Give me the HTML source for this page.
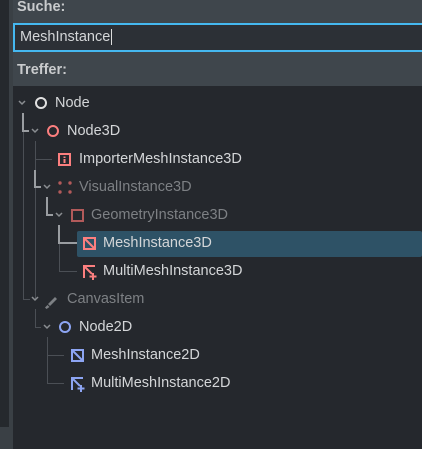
<!DOCTYPE html><html><head><style>
body{margin:0;width:422px;height:449px;overflow:hidden;background:#3f464c;font-family:"Liberation Sans","DejaVu Sans",sans-serif;position:relative}
.a{position:absolute}
.t{position:absolute;font-size:14.5px;color:#d4d6d8;line-height:16px;white-space:nowrap}
.g{color:#7d8084}
.b{font-weight:bold;color:#c9cbcd}
</style></head><body>
<div class="a" style="left:0;top:0;width:13px;height:449px;background:#3a4045"></div>
<div class="a" style="left:0;top:0;width:9px;height:427px;background:#25292d"></div>
<div class="t b" style="left:17px;top:-1px">Suche:</div>
<div class="a" style="left:13px;top:23px;height:25px;background:#2c3036;border-top:2px solid #45b8f0;border-bottom:2px solid #45b8f0;border-left:2px solid #45b8f0;width:407px"></div>
<div class="t" style="left:20px;top:29px">MeshInstance<span style="border-left:1px solid #ddd;margin-left:1px"></span></div>
<div class="t b" style="left:17px;top:62px">Treffer:</div>
<div class="a" style="left:13px;top:86px;width:409px;height:363px;background:#25282d"></div>
<div class="a" style="left:77px;top:231px;width:345px;height:26px;background:#2e5266;border-radius:2px"></div>
<svg class="a" style="left:0;top:0" width="422" height="449">
<g stroke="#4b4f55" stroke-width="1" fill="none">
<path d="M35.5 141V300M35.5 159.5H52M59.5 243V271.5H77M23.5 131V299.5H30M35.5 309V327.5H41M47.5 337V383.5H64M47.5 355.5H64"/>
</g>
<g stroke="#9a9da1" stroke-width="2" fill="none">
<path d="M23 113V131H29M35 170V187H41M47 197V215H53M59 225V243H77"/>
</g>
<g stroke="#8a8d91" stroke-width="1.5" fill="none">
<path d="M19 101l3 3 3-3M32 129l3 3 3-3M44 185l3 3 3-3M56 213l3 3 3-3M32 297l3 3 3-3M44 325l3 3 3-3"/>
</g>
<circle cx="41" cy="103" r="5" fill="none" stroke="#e0e0e0" stroke-width="2"/>
<circle cx="53" cy="131" r="5" fill="none" stroke="#fc7f7f" stroke-width="2"/>
<rect x="59" y="154" width="11" height="11" fill="none" stroke="#fc7f7f" stroke-width="2"/><path d="M64.5 156.5v1.5M64.5 159v4" stroke="#fc7f7f" stroke-width="2"/>
<g fill="#b25a5a"><circle cx="60" cy="183" r="1.7"/><circle cx="70" cy="183" r="1.7"/><circle cx="60" cy="192" r="1.7"/><circle cx="70" cy="192" r="1.7"/></g>
<rect x="72" y="210" width="11" height="11" fill="none" stroke="#b25a5a" stroke-width="2"/>
<rect x="84" y="238" width="11" height="11" fill="none" stroke="#fc7f7f" stroke-width="2"/><path d="M84 238l11 11" stroke="#fc7f7f" stroke-width="2"/>
<path d="M84 278V266h11M84 266l8 8M93 273v7M89.5 276.5h7" stroke="#fc7f7f" stroke-width="2" fill="none"/>
<path d="M48 304l7-7 2 2-7 7zM45 307.5l2.5-2.5 2 2-3 2z" fill="#7d8084"/>
<circle cx="65" cy="327" r="5" fill="none" stroke="#8da5f3" stroke-width="2"/>
<rect x="72" y="350" width="11" height="11" fill="none" stroke="#8da5f3" stroke-width="2"/><path d="M72 350l11 11" stroke="#8da5f3" stroke-width="2"/>
<path d="M72 390V378h11M72 378l8 8M81 385v7M77.5 388.5h7" stroke="#8da5f3" stroke-width="2" fill="none"/>
</svg>
<div class="t" style="left:55px;top:95px">Node</div>
<div class="t" style="left:67px;top:123px">Node3D</div>
<div class="t" style="left:79px;top:151px">ImporterMeshInstance3D</div>
<div class="t g" style="left:79px;top:179px">VisualInstance3D</div>
<div class="t g" style="left:91px;top:207px">GeometryInstance3D</div>
<div class="t" style="left:103px;top:235px">MeshInstance3D</div>
<div class="t" style="left:103px;top:263px">MultiMeshInstance3D</div>
<div class="t g" style="left:67px;top:291px">CanvasItem</div>
<div class="t" style="left:79px;top:319px">Node2D</div>
<div class="t" style="left:91px;top:347px">MeshInstance2D</div>
<div class="t" style="left:91px;top:375px">MultiMeshInstance2D</div>
</body></html>
